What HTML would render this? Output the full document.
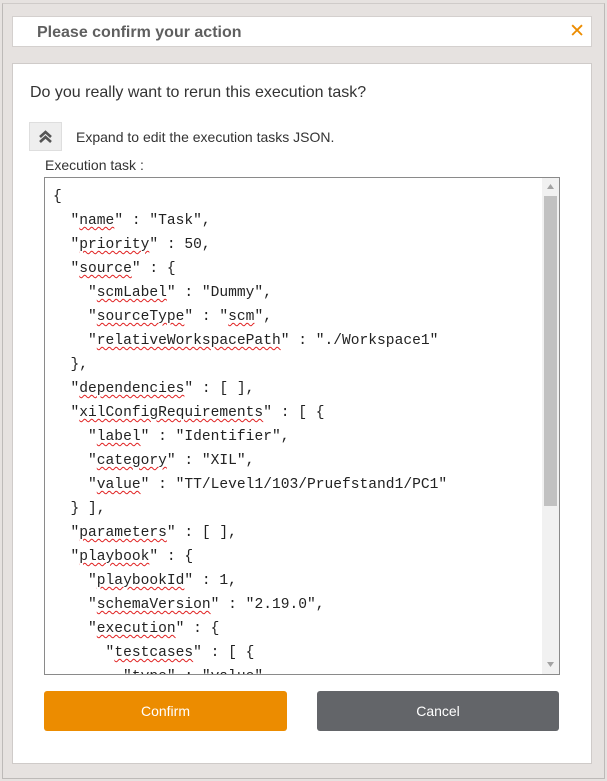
<!DOCTYPE html>
<html><head><style>
html,body{margin:0;padding:0;width:607px;height:781px;overflow:hidden;background:#e6e2e0;font-family:"Liberation Sans",Arial,sans-serif;}
.outer{position:absolute;left:2px;top:3px;width:601px;height:774px;background:#e6e2e0;border:1px solid #bdbab8;border-top:1px solid #cfcbc9;}
.hdr{position:absolute;left:12px;top:16px;width:578px;height:29px;background:#fff;border:1px solid #d4d0ce;}
.hdr .t{position:absolute;left:24px;top:7px;font-size:16px;font-weight:bold;color:#5f5f5f;}
.hdr .x{position:absolute;right:6px;top:3px;font-size:19px;color:#ec8c00;}
.body{position:absolute;left:12px;top:63px;width:578px;height:699px;background:#fff;border:1px solid #cfcbc9;}
.q{position:absolute;left:17px;top:20px;font-size:16px;color:#333;}
.btnc{position:absolute;left:16px;top:58px;width:31px;height:27px;background:#eeeeee;border:1px solid #dedede;}
.exp{position:absolute;left:63px;top:65px;font-size:14px;color:#333;}
.lbl{position:absolute;left:32px;top:93px;font-size:14px;color:#333;}
.ta{position:absolute;left:31px;top:113px;width:514px;height:496px;border:1px solid #8a8a8a;background:#fff;overflow:hidden;}
pre{margin:0;position:absolute;left:8px;top:7px;font-family:"Liberation Mono",monospace;font-size:14.6px;line-height:24px;color:#222;}
u{text-decoration:underline wavy #e02020;text-decoration-thickness:1px;text-underline-offset:2px;}
.sb{position:absolute;right:0;top:0;width:17px;height:496px;background:#f1f1f1;}
.th{position:absolute;left:2px;top:18px;width:13px;height:310px;background:#c1c1c1;}
.bt{position:absolute;top:627px;height:40px;width:243px;border-radius:3px;color:#fff;font-size:14px;text-align:center;line-height:40px;}
</style></head><body>
<div class="outer"></div>
<div class="hdr"><div class="t">Please confirm your action</div><div class="x">✕</div></div>
<div class="body">
<div class="q">Do you really want to rerun this execution task?</div>
<div class="btnc"><svg width="31" height="27" viewBox="0 0 31 27"><path d="M10 14 L15.5 9 L21 14 M10 19 L15.5 14 L21 19" stroke="#555" stroke-width="2.6" fill="none"/></svg></div>
<div class="exp">Expand to edit the execution tasks JSON.</div>
<div class="lbl">Execution task :</div>
<div class="ta"><pre>{
  "<u>name</u>" : "Task",
  "<u>priority</u>" : 50,
  "<u>source</u>" : {
    "<u>scmLabel</u>" : "Dummy",
    "<u>sourceType</u>" : "<u>scm</u>",
    "<u>relativeWorkspacePath</u>" : "./Workspace1"
  },
  "<u>dependencies</u>" : [ ],
  "<u>xilConfigRequirements</u>" : [ {
    "<u>label</u>" : "Identifier",
    "<u>category</u>" : "XIL",
    "<u>value</u>" : "TT/Level1/103/Pruefstand1/PC1"
  } ],
  "<u>parameters</u>" : [ ],
  "<u>playbook</u>" : {
    "<u>playbookId</u>" : 1,
    "<u>schemaVersion</u>" : "2.19.0",
    "<u>execution</u>" : {
      "<u>testcases</u>" : [ {
        "type" : "value",</pre>
<div class="sb"><svg width="17" height="496" style="position:absolute;left:0;top:0"><path d="M5 11 L8.5 6 L12 11Z M5 484 L8.5 489 L12 484Z" fill="#a3a3a3"/></svg><div class="th"></div></div></div>
<div class="bt" style="left:31px;background:#ec8c00">Confirm</div>
<div class="bt" style="left:304px;background:#636569;width:242px">Cancel</div>
</div>
</body></html>
